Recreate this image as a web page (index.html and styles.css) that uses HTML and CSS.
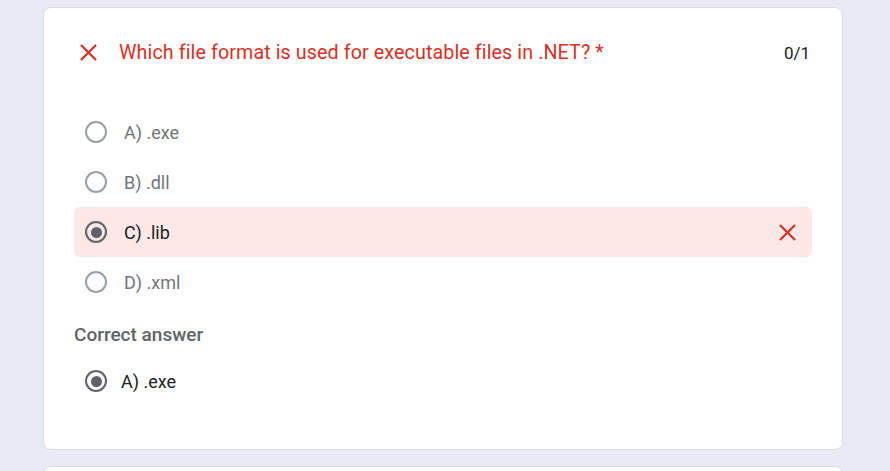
FILE: index.html
```html
<!DOCTYPE html>
<html>
<head>
<meta charset="utf-8">
<link rel="stylesheet" href="styles.css">
</head>
<body>
<div class="page">
  <div class="card">
    <div class="header">
      <svg class="xicon" viewBox="0 0 18 18"><path d="M1 1L17 17M17 1L1 17" stroke="#d93025" stroke-width="2.4" fill="none"/></svg>
      <div class="qtitle">Which file format is used for executable files in .NET? *</div>
      <div class="score">0/1</div>
    </div>
    <div class="options">
      <div class="opt"><span class="radio"></span><span class="otext">A) .exe</span></div>
      <div class="opt"><span class="radio"></span><span class="otext">B) .dll</span></div>
      <div class="opt wrong"><span class="radio checked"></span><span class="otext dark">C) .lib</span>
        <svg class="xicon small" viewBox="0 0 18 18"><path d="M1 1L17 17M17 1L1 17" stroke="#d93025" stroke-width="2.4" fill="none"/></svg>
      </div>
      <div class="opt"><span class="radio"></span><span class="otext">D) .xml</span></div>
    </div>
    <div class="correct-label">Correct answer</div>
    <div class="opt correct"><span class="radio checked"></span><span class="otext dark">A) .exe</span></div>
  </div>
  <div class="card next"></div>
</div>
</body>
</html>
```
FILE: styles.css
```css
html, body {
  margin: 0;
  padding: 0;
  background: #e8ebf6;
  font-family: Roboto, "Noto Sans", Arial, sans-serif;
  overflow: hidden;
  height: 471px;
}
.page {
  padding: 7px 0 0 43px;
  display: flex;
  flex-direction: column;
  gap: 16px;
}
.card {
  width: 800px;
  background: #fff;
  border: 1px solid #dadce0;
  border-radius: 8px;
  padding: 0 30px;
  box-sizing: border-box;
  height: 443px;
  flex: none;
}
.card.next {
  height: 100px;
}
.header {
  display: flex;
  align-items: center;
  height: 89px;
}
.xicon {
  width: 17px;
  height: 17px;
  margin-left: 6px;
  flex: none;
}
.qtitle {
  margin-left: 22px;
  color: #d93025;
  font-size: 19.7px;
  letter-spacing: 0.1px;
  flex: 1;
}
.score {
  color: #202124;
  font-size: 17px;
  margin-right: 2px;
}
.options {
  margin-top: 10px;
  display: flex;
  flex-direction: column;
}
.opt {
  height: 50px;
  display: flex;
  align-items: center;
  padding-left: 11px;
  border-radius: 6px;
}
.opt.wrong {
  background: #fce8e6;
}
.opt .xicon.small {
  margin-left: auto;
  margin-right: 16px;
}
.radio {
  width: 22px;
  height: 22px;
  box-sizing: border-box;
  border: 2px solid #9aa0a6;
  border-radius: 50%;
  flex: none;
  display: flex;
  align-items: center;
  justify-content: center;
}
.radio.checked {
  border-color: #5f6368;
}
.radio.checked::after {
  content: "";
  width: 11px;
  height: 11px;
  border-radius: 50%;
  background: #5f6368;
}
.otext {
  margin-left: 17px;
  font-size: 18px;
  color: #70757a;
}
.otext.dark {
  color: #202124;
}
.correct-label {
  margin-top: 16px;
  font-size: 19px;
  font-weight: 500;
  color: #5f6368;
}
.opt.correct {
  margin-top: 10px;
}
.opt.correct .otext {
  margin-left: 14px;
}
```
